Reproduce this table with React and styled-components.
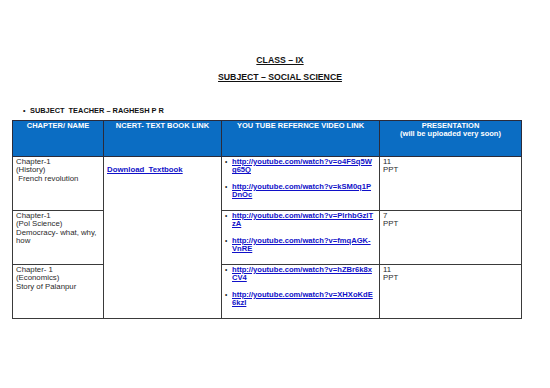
import React from "react";
import styled, { createGlobalStyle } from "styled-components";

const GlobalStyle = createGlobalStyle`
  html, body {
    margin: 0;
    padding: 0;
    background: #ffffff;
  }
  body {
    font-family: "Liberation Sans", Arial, sans-serif;
    color: #1a1a1a;
  }
`;

const rows = [
  {
    chapter: ["Chapter-1", "(History)", "\u00a0French revolution"],
    links: [
      ["http://youtube.com/watch?v=o4FSq5W", "g65Q"],
      ["http://youtube.com/watch?v=kSM0q1P", "DnOc"]
    ],
    slides: ["11", "PPT"]
  },
  {
    chapter: ["Chapter-1", "(Pol Science)", "Democracy- what, why,", "how"],
    links: [
      ["http://youtube.com/watch?v=PlrhbGzIT", "zA"],
      ["http://youtube.com/watch?v=fmqAGK-", "VnRE"]
    ],
    slides: ["7", "PPT"]
  },
  {
    chapter: ["Chapter- 1", "(Economics)", "Story of Palanpur"],
    links: [
      ["http://youtube.com/watch?v=hZBr6k8x", "CV4"],
      ["http://youtube.com/watch?v=XHXoKdE", "6kzI"]
    ],
    slides: ["11", "PPT"]
  }
];

export default function App() {
  return (
    <Page>
      <GlobalStyle />
      <Heading>CLASS – IX</Heading>
      <Heading>SUBJECT – SOCIAL SCIENCE</Heading>
      <Teacher>
        <Dot>•</Dot>
        <span>SUBJECT&nbsp; TEACHER – RAGHESH P R</span>
      </Teacher>
      <Table>
        <colgroup>
          <col style={{ width: 91 }} />
          <col style={{ width: 118 }} />
          <col style={{ width: 158 }} />
          <col style={{ width: 142 }} />
        </colgroup>
        <thead>
          <tr>
            <Th>CHAPTER/ NAME</Th>
            <Th>NCERT- TEXT BOOK LINK</Th>
            <Th>YOU TUBE REFERNCE VIDEO LINK</Th>
            <Th>
              PRESENTATION
              <br />
              (will be uploaded very soon)
            </Th>
          </tr>
        </thead>
        <tbody>
          {rows.map((row, i) => (
            <Tr key={i}>
              <Td>
                {row.chapter.map((line, j) => (
                  <Line key={j}>{line}</Line>
                ))}
              </Td>
              {i === 0 && (
                <BookCell rowSpan={3}>
                  <Link href="#">Download&nbsp; Textbook</Link>
                </BookCell>
              )}
              <Td>
                <LinkList>
                  {row.links.map((link, j) => (
                    <LinkItem key={j}>
                      <Bullet>•</Bullet>
                      <Link href="#">
                        {link[0]}
                        <br />
                        {link[1]}
                      </Link>
                    </LinkItem>
                  ))}
                </LinkList>
              </Td>
              <Td>
                {row.slides.map((line, j) => (
                  <Line key={j}>{line}</Line>
                ))}
              </Td>
            </Tr>
          ))}
        </tbody>
      </Table>
    </Page>
  );
}

const Page = styled.div`
  width: 550px;
  height: 388px;
  padding-top: 55px;
  box-sizing: border-box;
  display: flex;
  flex-direction: column;
`;

const Heading = styled.div`
  font-size: 8.7px;
  font-weight: bold;
  text-decoration: underline;
  text-align: center;
  line-height: 10px;
  padding-left: 10px;
  margin-bottom: 7px;
  color: #111;
`;

const Teacher = styled.div`
  display: flex;
  align-items: center;
  margin: 17px 0 5px 23px;
  font-size: 7.4px;
  font-weight: bold;
  line-height: 9px;
  color: #111;
`;

const Dot = styled.span`
  width: 7px;
  font-size: 7px;
`;

const Table = styled.table`
  margin-left: 12px;
  width: 509px;
  border-collapse: collapse;
  table-layout: fixed;
  font-size: 7.8px;
  line-height: 8.4px;
`;

const Th = styled.th`
  background: #0b6dc3;
  color: #ffffff;
  font-size: 7.5px;
  font-weight: bold;
  height: 36px;
  vertical-align: top;
  text-align: center;
  padding: 1px 1px 0;
  border: 1px solid #2b2b3a;
  box-sizing: border-box;
`;

const Tr = styled.tr`
  height: 54px;
`;

const Td = styled.td`
  vertical-align: top;
  padding: 1px 3px 0;
  border: 1px solid #3a3a3a;
  color: #2a2a2a;
`;

const BookCell = styled(Td)`
  padding-top: 9px;
`;

const Line = styled.div`
  white-space: nowrap;
`;

const LinkList = styled.div`
  display: flex;
  flex-direction: column;
  gap: 8px;
`;

const LinkItem = styled.div`
  display: flex;
  align-items: flex-start;
  font-size: 7.6px;
`;

const Bullet = styled.span`
  width: 7px;
  flex: none;
  font-size: 6.5px;
  color: #222;
`;

const Link = styled.a`
  color: #1010c8;
  font-weight: bold;
  text-decoration: underline;
  white-space: nowrap;
`;
